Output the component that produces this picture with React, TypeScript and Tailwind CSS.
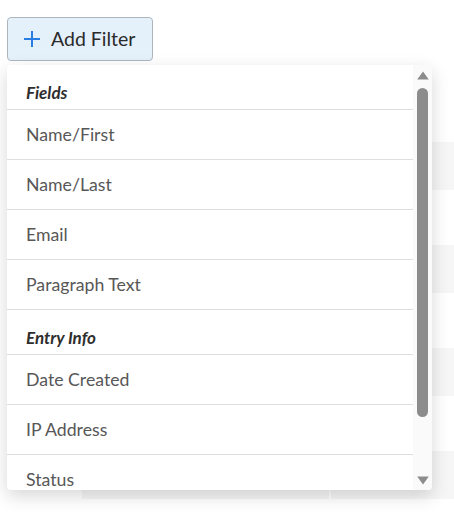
import React from "react";

type Row = { kind: "heading" | "item"; label: string };

const rows: Row[] = [
  { kind: "heading", label: "Fields" },
  { kind: "item", label: "Name/First" },
  { kind: "item", label: "Name/Last" },
  { kind: "item", label: "Email" },
  { kind: "item", label: "Paragraph Text" },
  { kind: "heading", label: "Entry Info" },
  { kind: "item", label: "Date Created" },
  { kind: "item", label: "IP Address" },
  { kind: "item", label: "Status" },
];

const PlusIcon = () => (
  <svg width="18" height="18" viewBox="0 0 18 18" className="text-[#2a7de1]">
    <path d="M9 1v16M1 9h16" stroke="currentColor" strokeWidth="2" fill="none" />
  </svg>
);

const App = () => {
  return (
    <div
      className="relative w-[454px] h-[514px] overflow-hidden bg-white"
      style={{ fontFamily: "Lato, 'Open Sans', sans-serif" }}
    >
      <div className="pt-[17px] pl-[7px]">
        <button className="flex items-center gap-[10px] h-[44px] w-[146px] pl-[15px] rounded-[4px] border border-[#adb6bf] bg-[#e4f0fa] text-[19.5px] text-[#2b2b2b]">
          <PlusIcon />
          <span>Add Filter</span>
        </button>
      </div>

      {/* table behind the menu */}
      <div className="mt-[81px] ml-[82px] flex flex-col">
        {[0, 1, 2, 3].map((i) => (
          <div key={i} className="flex flex-col">
            <div className="flex h-[48px] gap-[2px]">
              <div className="w-[247px] bg-[#f6f6f6]" />
              <div className="flex-1 bg-[#f6f6f6]" />
            </div>
            <div className="h-[55px]" />
          </div>
        ))}
      </div>

      {/* dropdown menu */}
      <div className="absolute left-[7px] top-[65px] w-[425px] h-[425px] flex rounded-[4px] bg-white shadow-[0_6px_18px_rgba(0,0,0,0.16)] overflow-hidden">
        <div className="flex-1 flex flex-col">
          {rows.map((r) =>
            r.kind === "heading" ? (
              <div
                key={r.label}
                className="h-[45px] shrink-0 flex items-end pb-[4px] pl-[19px] border-b border-[#dedede] text-[17px] font-bold italic text-[#2e2e2e]"
              >
                {r.label}
              </div>
            ) : (
              <div
                key={r.label}
                className="h-[50px] shrink-0 flex items-center pt-[2px] pl-[19px] border-b border-[#dedede] text-[17.7px] text-[#575757]"
              >
                {r.label}
              </div>
            )
          )}
        </div>
        <div className="w-[19px] shrink-0 bg-[#fafafa] flex flex-col items-center">
          <svg width="12" height="9" viewBox="0 0 12 9" className="mt-[6px] text-[#8c8c8c]">
            <path d="M6 0.5 L11.8 8.5 L0.2 8.5 Z" fill="currentColor" />
          </svg>
          <div className="mt-[8px] w-[11px] h-[329px] rounded-full bg-[#8c8c8c]" />
          <div className="flex-1" />
          <svg width="12" height="9" viewBox="0 0 12 9" className="mb-[5px] text-[#8c8c8c]">
            <path d="M0.2 0.5 L11.8 0.5 L6 8.5 Z" fill="currentColor" />
          </svg>
        </div>
      </div>
    </div>
  );
};

export default App;
